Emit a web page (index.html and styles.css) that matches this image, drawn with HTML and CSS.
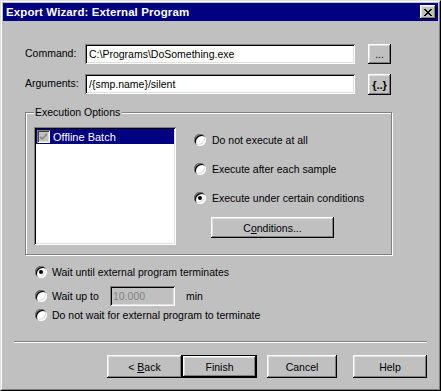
FILE: index.html
```html
<!DOCTYPE html>
<html lang="en">
<head>
    <meta charset="UTF-8">
    <title>Export Wizard: External Program</title>
    <link rel="stylesheet" href="styles.css">
</head>
<body>
    <div class="window">
        <div class="frame">
            <div class="titlebar">
                <span class="title">Export Wizard: External Program</span>
                <button class="close-btn" type="button">
                    <svg width="8" height="7" viewBox="0 0 8 7">
                        <path d="M0 0h2v1h1v1h2v-1h1v-1h2v1h-1v1h-1v1h-1v1h1v1h1v1h1v1h-2v-1h-1v-1h-2v1h-1v1h-2v-1h1v-1h1v-1h1v-1h-1v-1h-1v-1h-1z" fill="#000"/>
                    </svg>
                </button>
            </div>

            <div class="content">
                <div class="field-row first">
                    <label class="field-label" for="command">Command:</label>
                    <input class="textbox wide" id="command" type="text" value="C:\Programs\DoSomething.exe">
                    <button class="btn side-btn" type="button">...</button>
                </div>

                <div class="field-row second">
                    <label class="field-label" for="args">Arguments:</label>
                    <input class="textbox wide" id="args" type="text" value="/{smp.name}/silent">
                    <button class="btn side-btn vars-btn" type="button">{..}</button>
                </div>

                <div class="group">
                    <span class="legend">Execution Options</span>
                    <div class="listbox">
                        <div class="list-item selected">
                            <span class="check-box">
                                <svg width="9" height="9" viewBox="0 0 9 9">
                                    <path d="M1 4l2 2 5-5v2l-5 5-2-2z" fill="#808080"/>
                                </svg>
                            </span>
                            <span>Offline Batch</span>
                        </div>
                    </div>
                    <div class="exec-options">
                        <div class="radio-row">
                            <span class="radio"></span>
                            <span>Do not execute at all</span>
                        </div>
                        <div class="radio-row">
                            <span class="radio"></span>
                            <span>Execute after each sample</span>
                        </div>
                        <div class="radio-row">
                            <span class="radio checked"></span>
                            <span>Execute under certain conditions</span>
                        </div>
                        <button class="btn cond-btn" type="button">C<u>o</u>nditions...</button>
                    </div>
                </div>

                <div class="wait-options">
                    <div class="radio-row wait-row">
                        <span class="radio checked"></span>
                        <span>Wait until external program terminates</span>
                    </div>
                    <div class="radio-row wait-row upto">
                        <span class="radio"></span>
                        <span class="upto-label">Wait up to</span>
                        <input class="textbox minutes" type="text" value="10.000" disabled>
                        <span class="unit">min</span>
                    </div>
                    <div class="radio-row wait-row last">
                        <span class="radio"></span>
                        <span>Do not wait for external program to terminate</span>
                    </div>
                </div>

                <div class="separator"></div>

                <div class="button-row">
                    <button class="btn nav-btn" type="button">&lt; <u>B</u>ack</button>
                    <button class="btn nav-btn default" type="button">Finish</button>
                    <button class="btn nav-btn cancel" type="button">Cancel</button>
                    <button class="btn nav-btn help" type="button">Help</button>
                </div>
            </div>
        </div>
    </div>
</body>
</html>
```

FILE: styles.css
```css
* {
    margin: 0;
    padding: 0;
    box-sizing: border-box;
}

body {
    font-family: "Liberation Sans", Arial, sans-serif;
    font-size: 10.5px;
    color: #000;
    background: #c0c0c0;
}

.window {
    width: 441px;
    height: 391px;
    background: #c0c0c0;
    border: 1px solid;
    border-color: #dfdfdf #000 #000 #dfdfdf;
}

.frame {
    height: 100%;
    border: 1px solid;
    border-color: #fff #808080 #808080 #fff;
    padding: 1px;
    display: flex;
    flex-direction: column;
}

/* title bar */
.titlebar {
    height: 18px;
    background: #000080;
    color: #fff;
    display: flex;
    align-items: center;
    justify-content: space-between;
    padding: 0 2px 0 3px;
}

.title {
    font-weight: bold;
    font-size: 11.5px;
    letter-spacing: 0.1px;
}

.close-btn {
    width: 16px;
    height: 14px;
    border: none;
    background: #c0c0c0;
    display: flex;
    align-items: center;
    justify-content: center;
    padding-top: 1px;
    box-shadow: inset -1px -1px #000, inset 1px 1px #fff, inset -2px -2px #808080, inset 2px 2px #dfdfdf;
}

/* common controls */
.btn {
    font: inherit;
    color: #000;
    background: #c0c0c0;
    border: none;
    box-shadow: inset -1px -1px #000, inset 1px 1px #fff, inset -2px -2px #808080, inset 2px 2px #dfdfdf;
}

.textbox {
    font: inherit;
    color: #000;
    background: #fff;
    border: none;
    height: 20px;
    padding: 0 3px 0 4px;
    box-shadow: inset 1px 1px #808080, inset -1px -1px #fff, inset 2px 2px #000, inset -2px -2px #dfdfdf;
}

.textbox:disabled {
    background: #c0c0c0;
    color: #808080;
}

.content {
    flex: 1;
    display: flex;
    flex-direction: column;
    padding: 0 11px 0 22px;
}

.field-row {
    display: flex;
    align-items: flex-start;
}

.field-row.first {
    margin-top: 23px;
}

.field-row.second {
    margin-top: 10px;
}

.field-label {
    width: 60px;
    line-height: 19px;
}

.textbox.wide {
    width: 270px;
}

.side-btn {
    width: 23px;
    height: 20px;
    margin-left: 13px;
    font-size: 10px;
}

.vars-btn {
    height: 21px;
    font-weight: bold;
    font-size: 11px;
}

/* execution options group */
.group {
    position: relative;
    margin-top: 17px;
    width: 367px;
    height: 143px;
    border: 1px solid #808080;
    box-shadow: inset 1px 1px #fff, 1px 1px #fff;
    display: flex;
    padding: 14px 0 0 8px;
    gap: 18px;
}

.legend {
    position: absolute;
    top: -8px;
    left: 8px;
    padding: 0 2px 0 1px;
    background: #c0c0c0;
    line-height: 14px;
}

.listbox {
    width: 142px;
    height: 118px;
    background: #fff;
    padding: 2px;
    box-shadow: inset 1px 1px #808080, inset -1px -1px #fff, inset 2px 2px #000, inset -2px -2px #dfdfdf;
}

.list-item {
    height: 15px;
    display: flex;
    align-items: center;
    gap: 3px;
    padding-left: 1px;
    font-size: 11px;
}

.list-item.selected {
    background: #000080;
    color: #fff;
}

.check-box {
    width: 13px;
    height: 13px;
    background: #c0c0c0;
    display: flex;
    align-items: center;
    justify-content: center;
    box-shadow: inset 1px 1px #808080, inset -1px -1px #fff, inset 2px 2px #404040, inset -2px -2px #dfdfdf;
}

.exec-options {
    display: flex;
    flex-direction: column;
    align-items: flex-start;
    padding-top: 5px;
}

.radio-row {
    display: flex;
    align-items: center;
    height: 16px;
    gap: 6px;
    white-space: nowrap;
}

.exec-options .radio-row + .radio-row {
    margin-top: 13px;
}

.radio {
    width: 12px;
    height: 12px;
    border-radius: 50%;
    background: #fff;
    position: relative;
    flex-shrink: 0;
    box-shadow: inset 1px 1px #808080, inset -1px -1px #fff, inset 2px 2px #000, inset -2px -2px #dfdfdf;
}

.radio.checked::after {
    content: '';
    position: absolute;
    left: 4px;
    top: 4px;
    width: 4px;
    height: 4px;
    border-radius: 50%;
    background: #000;
}

.cond-btn {
    margin-top: 11px;
    margin-left: 17px;
    width: 123px;
    height: 21px;
}

/* wait options */
.wait-options {
    margin-top: 9px;
    margin-left: 10px;
    display: flex;
    flex-direction: column;
}

.wait-row {
    gap: 5px;
}

.wait-row.upto {
    height: 20px;
    margin-top: 6px;
}

.wait-row.last {
    margin-top: 1px;
}

.upto-label {
    width: 53px;
}

.textbox.minutes {
    width: 65px;
    padding-left: 3px;
}

.unit {
    margin-left: 6px;
}

.separator {
    margin-top: 18px;
    margin-left: -11px;
    width: 413px;
    border-top: 1px solid #808080;
    border-bottom: 1px solid #fff;
}

.button-row {
    margin-top: 12px;
    display: flex;
    justify-content: flex-end;
}

.nav-btn {
    width: 75px;
    height: 23px;
}

.nav-btn.default {
    border: 1px solid #000;
}

.nav-btn.cancel {
    width: 70px;
    margin-left: 10px;
}

.nav-btn.help {
    width: 74px;
    margin-left: 16px;
}
```
